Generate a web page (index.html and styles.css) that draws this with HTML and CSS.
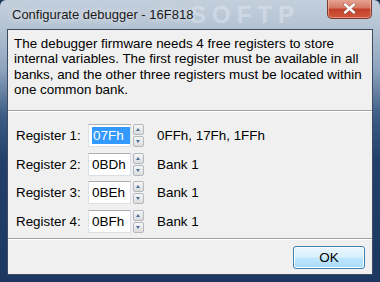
FILE: index.html
```html
<!DOCTYPE html>
<html lang="en">

<head>
  <meta charset="UTF-8">
  <meta name="viewport" content="width=device-width, initial-scale=1.0">
  <title>Configurate debugger</title>
  <link rel="stylesheet" href="styles.css">
</head>

<body>

  <div class="window">
    <!-- Title bar -->
    <div class="title-bar">
      <span class="title">Configurate debugger - 16F818</span>
      <span class="title-mark">SOFTP</span>
      <button class="close-btn" aria-label="Close">
        <svg width="13" height="11" viewBox="0 0 13 11">
          <path d="M2 1.5 L11 9.5 M11 1.5 L2 9.5" stroke="#4a3a3a" stroke-width="3.6" stroke-linecap="round" fill="none" opacity="0.5" />
          <path d="M2 1.5 L11 9.5 M11 1.5 L2 9.5" stroke="#ffffff" stroke-width="2.4" stroke-linecap="round" fill="none" />
        </svg>
      </button>
    </div>

    <!-- Client area -->
    <div class="client">
      <p class="intro">The debugger firmware needs 4 free registers to store internal variables. The first register must be available in all banks, and the other three registers must be located within one common bank.</p>

      <div class="separator"></div>

      <div class="register-list">
        <div class="register-row">
          <span class="reg-label">Register 1:</span>
          <div class="reg-input"><span class="selected">07Fh</span></div>
          <div class="spinner"><span class="spin up"></span><span class="spin down"></span></div>
          <span class="reg-info">0FFh, 17Fh, 1FFh</span>
        </div>
        <div class="register-row">
          <span class="reg-label">Register 2:</span>
          <div class="reg-input">0BDh</div>
          <div class="spinner"><span class="spin up"></span><span class="spin down"></span></div>
          <span class="reg-info">Bank 1</span>
        </div>
        <div class="register-row">
          <span class="reg-label">Register 3:</span>
          <div class="reg-input">0BEh</div>
          <div class="spinner"><span class="spin up"></span><span class="spin down"></span></div>
          <span class="reg-info">Bank 1</span>
        </div>
        <div class="register-row">
          <span class="reg-label">Register 4:</span>
          <div class="reg-input">0BFh</div>
          <div class="spinner"><span class="spin up"></span><span class="spin down"></span></div>
          <span class="reg-info">Bank 1</span>
        </div>
      </div>

      <div class="separator"></div>

      <div class="button-bar">
        <button class="ok-btn">OK</button>
      </div>
    </div>
  </div>

</body>

</html>
```

FILE: styles.css
```css
/* Reset */
* {
  margin: 0;
  padding: 0;
  box-sizing: border-box;
}

body {
  width: 380px;
  height: 282px;
  overflow: hidden;
  background-color: #1d3557;
  font-family: 'Liberation Sans', Arial, sans-serif;
  font-size: 13.4px;
  color: #000;
}

/* Aero style frame */
.window {
  width: 380px;
  height: 282px;
  border-radius: 6px 6px 0 0;
  background: linear-gradient(to bottom, #c3cfdc 0, #b4c3d3 28px, #8da3bd 70px, #3e5d86 115px, #22406a 160px, #1c3860 100%);
  display: flex;
  flex-direction: column;
}

.title-bar {
  position: relative;
  height: 29px;
  display: flex;
  align-items: center;
  padding-left: 12px;
}

.title {
  font-size: 13px;
  color: #1a1a1a;
  text-shadow: 0 0 6px rgba(255, 255, 255, 0.9);
  position: relative;
  z-index: 1;
}

.title-mark {
  position: absolute;
  left: 190px;
  top: 1px;
  line-height: 27px;
  font-size: 24px;
  font-weight: bold;
  letter-spacing: 6px;
  color: rgba(235, 242, 250, 0.4);
}

.close-btn {
  position: absolute;
  top: -1px;
  right: 8px;
  width: 45px;
  height: 20px;
  border: 1px solid #7a3a30;
  border-top: none;
  border-radius: 0 0 5px 5px;
  background: linear-gradient(to bottom, #e8a898 0, #d67a66 45%, #c3402a 55%, #d0583c 100%);
  box-shadow: inset 0 0 0 1px rgba(255, 200, 190, 0.5);
  display: flex;
  align-items: center;
  justify-content: center;
}

.client {
  flex: 1;
  margin: 0 7px 7px;
  border: 1px solid #3c4d63;
  background-color: #f0f0f0;
  display: flex;
  flex-direction: column;
}

.intro {
  padding: 6px 6px 0 6px;
  line-height: 15.3px;
  height: 80px;
}

.separator {
  height: 2px;
  border-top: 1px solid #a0a0a0;
  border-bottom: 1px solid #ffffff;
}

.register-list {
  padding: 12px 0 0 8px;
  display: flex;
  flex-direction: column;
  gap: 5.5px;
  height: 126px;
}

.register-row {
  display: flex;
  align-items: center;
  height: 23px;
}

.reg-label {
  width: 72px;
}

.reg-input {
  width: 43px;
  height: 23px;
  background-color: #fff;
  border: 1px solid #dbdfe6;
  border-top-color: #abadb3;
  padding: 2px 0 0 3px;
  line-height: 17px;
  font-size: 13.5px;
}

.selected {
  display: inline-block;
  background-color: #3399ff;
  color: #fff;
  padding: 0 1px;
  width: 38px;
}

.spinner {
  width: 11px;
  height: 23px;
  margin-left: 2px;
  display: flex;
  flex-direction: column;
  gap: 1px;
}

.spin {
  flex: 1;
  border: 1px solid #b4b8c0;
  background: linear-gradient(to bottom, #f6f6f6, #dcdcdc);
  border-radius: 2px;
  position: relative;
}

.spin::after {
  content: '';
  position: absolute;
  left: 2px;
  top: 3px;
  border-left: 2.5px solid transparent;
  border-right: 2.5px solid transparent;
}

.spin.up::after {
  border-bottom: 3px solid #4a6d9a;
}

.spin.down::after {
  border-top: 3px solid #4a6d9a;
}

.reg-info {
  margin-left: 13px;
}

.button-bar {
  flex: 1;
  display: flex;
  justify-content: flex-end;
  align-items: center;
  padding-right: 7px;
}

.ok-btn {
  width: 72px;
  height: 23px;
  font-family: 'Liberation Sans', Arial, sans-serif;
  font-size: 13.4px;
  border: 1px solid #3c7fb1;
  border-radius: 3px;
  background: linear-gradient(to bottom, #eaf6fd 0, #d9f0fc 45%, #bee6fd 55%, #a7d9f5 100%);
  box-shadow: inset 0 0 0 1px #ffffff;
  color: #000;
}
```
